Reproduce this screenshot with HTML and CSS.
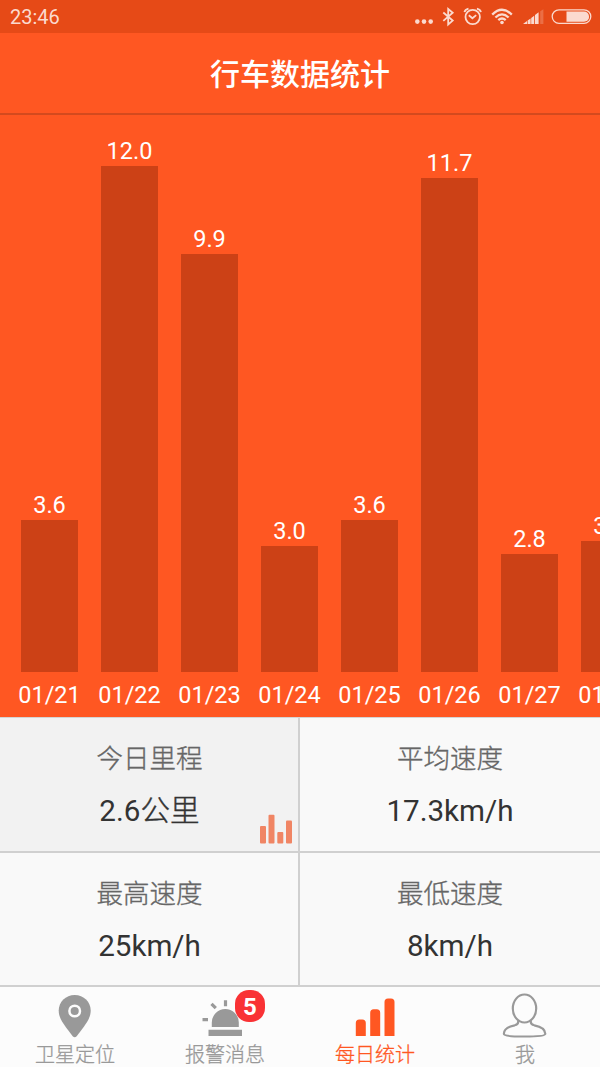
FILE: index.html
```html
<!DOCTYPE html>
<html lang="zh-CN">
<head>
<meta charset="utf-8">
<title>行车数据统计</title>
<link rel="stylesheet" href="styles.css">
</head>
<body>
<div class="app">
  <div class="status">
    <span class="time">23:46</span>
    <svg class="status-icons" width="186" height="33" viewBox="414 0 186 33" fill="none" stroke="#fbdacf" stroke-width="1.6">
      <g fill="#fbdacf" stroke="none"><circle cx="417.3" cy="21.6" r="2.3"/><circle cx="424" cy="21.6" r="2.3"/><circle cx="430.7" cy="21.6" r="2.3"/></g>
      <path stroke-width="1.8" d="M443.3 12.5l9.4 8.1-4.5 3.9V9l4.5 3.8-9.4 8.1"/>
      <circle cx="472.7" cy="17" r="7.2" stroke-width="1.8"/>
      <path stroke-width="1.800" d="M468.8 15.3l3.6 3 3.8-3.2M464.5 12.2q.5-2.7 4-3.6M480.9 12.2q-.5-2.7-4-3.6"/>
      <path stroke-width="2.300" d="M492.2 14.6q9.8-9.6 19.6 0M495.4 17.5q6.6-6.2 13.2 0M498.3 20.2q3.7-3.4 7.4 0"/>
      <circle cx="502" cy="22.5" r="1.8" fill="#fbdacf" stroke="none"/>
      <g fill="#fbdacf" stroke="none"><path d="M523 24l4-3v3zM527.600 20.600l3-2.100V24h-3zM531.200 17.900l3-2.100V24h-3zM535 15l3.600-2.700V24H535z"/><path opacity=".25" d="M540.2 11.300l3.200-2.100V24h-3.200z"/></g>
      <rect x="552.2" y="9.8" width="38.6" height="13.6" rx="6.8" stroke-width="1.3"/>
      <path d="M566.5 11.600H584a5 5 0 0 1 0 10.200h-17.5z" fill="#fbdacf" stroke="none"/>
    </svg>
  </div>
  <header class="title">行车数据统计</header>
  <main class="chart">
    <div class="col"><span class="val">3.6</span><i class="bar" style="height:152px"></i><span class="day">01/21</span></div>
    <div class="col"><span class="val">12.0</span><i class="bar" style="height:506.3px"></i><span class="day">01/22</span></div>
    <div class="col"><span class="val">9.9</span><i class="bar" style="height:418px"></i><span class="day">01/23</span></div>
    <div class="col"><span class="val">3.0</span><i class="bar" style="height:126.5px"></i><span class="day">01/24</span></div>
    <div class="col"><span class="val">3.6</span><i class="bar" style="height:152px"></i><span class="day">01/25</span></div>
    <div class="col"><span class="val">11.7</span><i class="bar" style="height:494px"></i><span class="day">01/26</span></div>
    <div class="col"><span class="val">2.8</span><i class="bar" style="height:118px"></i><span class="day">01/27</span></div>
    <div class="col"><span class="val">3.1</span><i class="bar" style="height:131px"></i><span class="day">01/28</span></div>
  </main>
  <section class="stats">
    <div class="stat active"><span class="name">今日里程</span><span class="num">2.6<span class="unit">公里</span></span>
      <svg class="mini" width="34" height="30" viewBox="0 0 34 30" fill="#f08564"><rect x="1" y="12" width="6" height="17.5" rx="1"/><rect x="9.5" y=".7" width="6" height="28.8" rx="1"/><rect x="18.3" y="18" width="6" height="11.5" rx="1"/><rect x="27" y="6.5" width="6" height="23" rx="1"/></svg>
    </div>
    <div class="stat"><span class="name">平均速度</span><span class="num">17.3km/h</span></div>
    <div class="stat"><span class="name">最高速度</span><span class="num">25km/h</span></div>
    <div class="stat"><span class="name">最低速度</span><span class="num">8km/h</span></div>
  </section>
  <nav class="tabs">
    <div class="tab">
      <svg width="150" height="56" viewBox="0 986 150 56"><path d="M74.7 995c-9 0-16 7-16 15.500 0 6.500 3.500 11.500 7 16.500l7 9.200q2 2 4 0l7-9.200c3.500-5 7-10 7-16.500 0-8.500-7-15.500-16-15.500z" fill="#999"/><circle cx="74.700" cy="1011" r="5.300" fill="#999" stroke="#fcfcfc" stroke-width="2.500"/></svg>
      <span>卫星定位</span>
    </div>
    <div class="tab">
      <svg width="150" height="56" viewBox="150 986 150 56"><path d="M211.800 1027v-4.500a13.500 13.500 0 0 1 27 0v4.500zM208.500 1029.800h33.500v6.200h-33.500z" fill="#999"/><path d="M202.500 1019.700h5.500M211.500 1003.800l4.300 4.300M225.500 1000.300v6" stroke="#999" stroke-width="3.200"/></svg>
      <b class="badge">5</b>
      <span>报警消息</span>
    </div>
    <div class="tab on">
      <svg width="150" height="56" viewBox="300 986 150 56" fill="#ff5722"><path d="M355.800 1036v-13q0-3.500 3.500-3.500h3q3.500 0 3.500 3.500v13zM370.200 1036v-23.300q0-3.500 3.500-3.500h3q3.500 0 3.500 3.500v23.300zM384.500 1036v-34q0-3.500 3.500-3.500h3q3.500 0 3.500 3.500v34z"/></svg>
      <span>每日统计</span>
    </div>
    <div class="tab">
      <svg width="150" height="56" viewBox="450 986 150 56" fill="none" stroke="#999" stroke-width="2.200"><ellipse cx="524.500" cy="1008.500" rx="11.700" ry="14"/><path d="M518.200 1020.500v1.500q0 2.500-3.500 3.300c-6 1.200-11 3-10.800 8.700q0 2.500 20.600 2.500t20.800-2.500c.2-5.700-5-7.500-11-8.700q-3.500-.8-3.500-3.300v-1.500"/></svg>
      <span>我</span>
    </div>
  </nav>
</div>
</body>
</html>
```
FILE: styles.css
```css
* { box-sizing: border-box; }
body { margin: 0; }
.app {
  width: 600px;
  height: 1067px;
  display: flex;
  flex-direction: column;
  overflow: hidden;
  background: #ff5722;
  font-family: Roboto, "Noto Sans CJK SC", sans-serif;
}
.status {
  height: 33px;
  flex: none;
  background: #e64a17;
  display: flex;
  justify-content: space-between;
}
.time { padding-left: 10px; font-size: 20px; line-height: 34px; color: #fbdacf; }
.title {
  height: 82px;
  flex: none;
  border-bottom: 2px solid #d44a1e;
  color: #fff;
  font-size: 30px;
  font-weight: 500;
  line-height: 83px;
  text-align: center;
}
.chart {
  height: 602px;
  flex: none;
  display: flex;
  align-items: flex-end;
  padding-left: 9.5px;
  overflow: hidden;
  color: #fff;
  font-size: 23.5px;
}
.col {
  width: 80px;
  flex: none;
  display: flex;
  flex-direction: column;
  align-items: center;
}
.val { line-height: 30px; }
.bar { width: 56.5px; background: #cc4116; }
.day { height: 45px; line-height: 46px; }
.stats {
  height: 269px;
  flex: none;
  display: grid;
  grid-template-columns: 300px 300px;
  grid-template-rows: 135px 134px;
  border-top: 1px solid #d4d4d4;
}
.stat {
  position: relative;
  display: flex;
  flex-direction: column;
  align-items: center;
  padding-top: 21px;
  background: #f9f9f9;
  border-bottom: 2px solid #d0d0d0;
}
.stat:nth-child(odd) { border-right: 2px solid #d0d0d0; padding-left: 1px; }
.stat.active { background: #f2f2f2; }
.name {
  font-size: 26.5px;
  line-height: 40px;
  color: #666;
  font-weight: 300;
  -webkit-text-stroke: .35px #666;
}
.num { margin-top: 12px; font-size: 29.6px; line-height: 40px; color: #333; }
.unit { font-weight: 300; -webkit-text-stroke: .4px #333; }
.mini { position: absolute; right: 5px; bottom: 7px; }
.tabs {
  height: 81px;
  flex: none;
  display: grid;
  grid-template-columns: repeat(4, 150px);
  background: #fcfcfc;
  color: #999;
}
.tab {
  position: relative;
  display: flex;
  flex-direction: column;
  align-items: center;
  font-size: 20px;
  font-weight: 300;
  line-height: 26px;
}
.tab svg { flex: none; }
.tab > span { -webkit-text-stroke: .3px currentColor; }
.tab.on { color: #ff5722; }
.badge {
  position: absolute;
  left: 85px;
  top: 4px;
  width: 30px;
  height: 32px;
  border-radius: 14px;
  background: #f93235;
  color: #fff;
  font-size: 24px;
  font-weight: 700;
  line-height: 35px;
  text-align: center;
}
```
